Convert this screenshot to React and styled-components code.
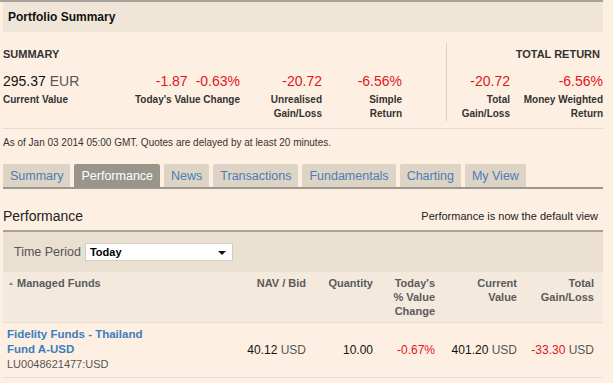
import React from 'react';
import styled, { createGlobalStyle } from 'styled-components';

const GlobalStyle = createGlobalStyle`
  body {
    margin: 0;
    background: #fdf0e2;
    font-family: "Liberation Sans", Arial, sans-serif;
    color: #222;
  }
`;

const Page = styled.div`
  width: 600px;
  margin-left: 3px;
`;

const TopBar = styled.div`
  height: 2px;
  background: #a7a39b;
  margin-left: -3px;
`;

const PanelHeader = styled.div`
  height: 30px;
  background: #f0e6d8;
  display: flex;
  align-items: center;
  padding-left: 5px;
  font-size: 12px;
  font-weight: bold;
  color: #111;
`;

const SummaryWrap = styled.div`
  display: flex;
  padding: 11px 0 7px;
  border-bottom: 1px solid #e2dbd0;
`;

const Group = styled.div`
  width: ${({ w }) => w}px;
  border-left: ${({ divided }) => (divided ? '1px solid #d6d0c6' : 'none')};
`;

const GroupTitle = styled.div`
  margin-top: 4px;
  line-height: 14px;
  font-size: 11px;
  font-weight: bold;
  color: #333;
  text-align: ${({ right }) => (right ? 'right' : 'left')};
  padding-right: ${({ right }) => (right ? '3px' : '0')};
`;

const Cells = styled.div`
  display: grid;
  grid-template-columns: ${({ cols }) => cols};
  margin-top: 11px;
`;

const Cell = styled.div`
  text-align: ${({ left }) => (left ? 'left' : 'right')};
`;

const Value = styled.div`
  font-size: 14px;
  line-height: 18px;
  margin-bottom: 3px;
  color: ${({ neg }) => (neg ? '#e3141d' : '#111')};
  white-space: nowrap;
`;

const Unit = styled.span`
  color: #555;
`;

const Gap = styled.span`
  margin-left: 8px;
`;

const Label = styled.div`
  font-size: 10px;
  font-weight: bold;
  line-height: 14px;
  color: #333;
`;

const Notice = styled.div`
  font-size: 10px;
  line-height: 14px;
  padding-top: 7px;
  color: #333;
`;

const Tabs = styled.div`
  display: flex;
  gap: 4px;
  margin-top: 14px;
  border-bottom: 2px solid #9d988f;
`;

const Tab = styled.div`
  height: 23px;
  line-height: 24px;
  padding: 0 7px;
  font-size: 12.5px;
  border-radius: 2px 2px 0 0;
  background: ${({ active }) => (active ? '#9a958b' : '#ddd4c6')};
  color: ${({ active }) => (active ? '#fff' : '#4a7db5')};
`;

const SectionHead = styled.div`
  display: flex;
  justify-content: space-between;
  align-items: center;
  margin-top: 18px;
  height: 18px;
  padding-right: 5px;
`;

const SectionTitle = styled.div`
  font-size: 14px;
  color: #222;
`;

const SectionNote = styled.div`
  font-size: 11px;
  color: #222;
`;

const FilterBar = styled.div`
  margin-top: 5px;
  border-top: 2px solid #a7a39b;
  height: 40px;
  background: #e9e0d2;
  display: flex;
  align-items: center;
  padding-left: 11px;
  gap: 4px;
`;

const FilterLabel = styled.span`
  font-size: 12.5px;
  color: #555;
`;

const SelectBox = styled.div`
  width: 136px;
  height: 16px;
  background: #fff;
  border: 1px solid #d3ccc0;
  display: flex;
  align-items: center;
  justify-content: space-between;
  padding: 0 6px 0 4px;
  box-sizing: content-box;
  font-size: 11px;
  font-weight: bold;
  color: #000;
`;

const Caret = styled.span`
  width: 0;
  height: 0;
  border-left: 4px solid transparent;
  border-right: 4px solid transparent;
  border-top: 4px solid #111;
  margin-top: 2px;
`;

const Table = styled.table`
  width: 600px;
  border-collapse: collapse;
  table-layout: fixed;
`;

const HeadRow = styled.tr`
  background: #f3e9dc;
  height: 50px;
  border-bottom: 1px solid #e4ddd2;
`;

const Th = styled.th`
  vertical-align: top;
  padding: 4px 4px 0;
  padding-right: ${({ last }) => (last ? '9px' : '4px')};
  font-size: 11px;
  font-weight: bold;
  line-height: 14px;
  color: #5b5b5b;
  text-align: ${({ left }) => (left ? 'left' : 'right')};
`;

const SortArrow = styled.span`
  display: inline-block;
  width: 0;
  height: 0;
  border-left: 2.5px solid transparent;
  border-right: 2.5px solid transparent;
  border-bottom: 3px solid #888;
  margin: 0 4px 2px 2px;
  vertical-align: middle;
`;

const BodyRow = styled.tr`
  height: 55px;
  border-bottom: 1px solid #e6dfd4;
`;

const Td = styled.td`
  vertical-align: middle;
  padding: 0 4px;
  padding-right: ${({ last }) => (last ? '9px' : '4px')};
  text-align: ${({ left }) => (left ? 'left' : 'right')};
  font-size: 12px;
  color: ${({ neg }) => (neg ? '#e3141d' : '#111')};
  white-space: nowrap;
`;

const NameCell = styled.td`
  padding: 4px 4px 5px;
  line-height: 15px;
  vertical-align: top;
`;

const FundLink = styled.div`
  font-size: 11.5px;
  font-weight: bold;
  color: #3b7dbd;
  width: 150px;
`;

const FundId = styled.div`
  font-size: 11px;
  color: #555;
`;

const tabs = ['Summary', 'Performance', 'News', 'Transactions', 'Fundamentals', 'Charting', 'My View'];

export default function App() {
  return (
    <>
      <GlobalStyle />
      <Page>
        <TopBar />
        <PanelHeader>Portfolio Summary</PanelHeader>
        <SummaryWrap>
          <Group w={443}>
            <GroupTitle>SUMMARY</GroupTitle>
            <Cells cols="130px 107px 82px 80px">
              <Cell left>
                <Value>295.37 <Unit>EUR</Unit></Value>
                <Label>Current Value</Label>
              </Cell>
              <Cell>
                <Value neg>-1.87<Gap>-0.63%</Gap></Value>
                <Label>Today's Value Change</Label>
              </Cell>
              <Cell>
                <Value neg>-20.72</Value>
                <Label>Unrealised<br />Gain/Loss</Label>
              </Cell>
              <Cell>
                <Value neg>-6.56%</Value>
                <Label>Simple<br />Return</Label>
              </Cell>
            </Cells>
          </Group>
          <Group w={156} divided>
            <GroupTitle right>TOTAL RETURN</GroupTitle>
            <Cells cols="63px 93px">
              <Cell>
                <Value neg>-20.72</Value>
                <Label>Total<br />Gain/Loss</Label>
              </Cell>
              <Cell>
                <Value neg>-6.56%</Value>
                <Label>Money Weighted<br />Return</Label>
              </Cell>
            </Cells>
          </Group>
        </SummaryWrap>
        <Notice>As of Jan 03 2014 05:00 GMT. Quotes are delayed by at least 20 minutes.</Notice>
        <Tabs>
          {tabs.map((t) => (
            <Tab key={t} active={t === 'Performance'}>{t}</Tab>
          ))}
        </Tabs>
        <SectionHead>
          <SectionTitle>Performance</SectionTitle>
          <SectionNote>Performance is now the default view</SectionNote>
        </SectionHead>
        <FilterBar>
          <FilterLabel>Time Period</FilterLabel>
          <SelectBox>
            Today
            <Caret />
          </SelectBox>
        </FilterBar>
        <Table>
          <colgroup>
            <col style={{ width: 158 }} />
            <col style={{ width: 149 }} />
            <col style={{ width: 67 }} />
            <col style={{ width: 62 }} />
            <col style={{ width: 82 }} />
            <col style={{ width: 82 }} />
          </colgroup>
          <thead>
            <HeadRow>
              <Th left><SortArrow />Managed Funds</Th>
              <Th>NAV / Bid</Th>
              <Th>Quantity</Th>
              <Th>Today's<br />% Value<br />Change</Th>
              <Th>Current<br />Value</Th>
              <Th last>Total<br />Gain/Loss</Th>
            </HeadRow>
          </thead>
          <tbody>
            <BodyRow>
              <NameCell>
                <FundLink>Fidelity Funds - Thailand Fund A-USD</FundLink>
                <FundId>LU0048621477:USD</FundId>
              </NameCell>
              <Td>40.12 <Unit>USD</Unit></Td>
              <Td>10.00</Td>
              <Td neg>-0.67%</Td>
              <Td>401.20 <Unit>USD</Unit></Td>
              <Td last neg>-33.30 <Unit>USD</Unit></Td>
            </BodyRow>
          </tbody>
        </Table>
      </Page>
    </>
  );
}
